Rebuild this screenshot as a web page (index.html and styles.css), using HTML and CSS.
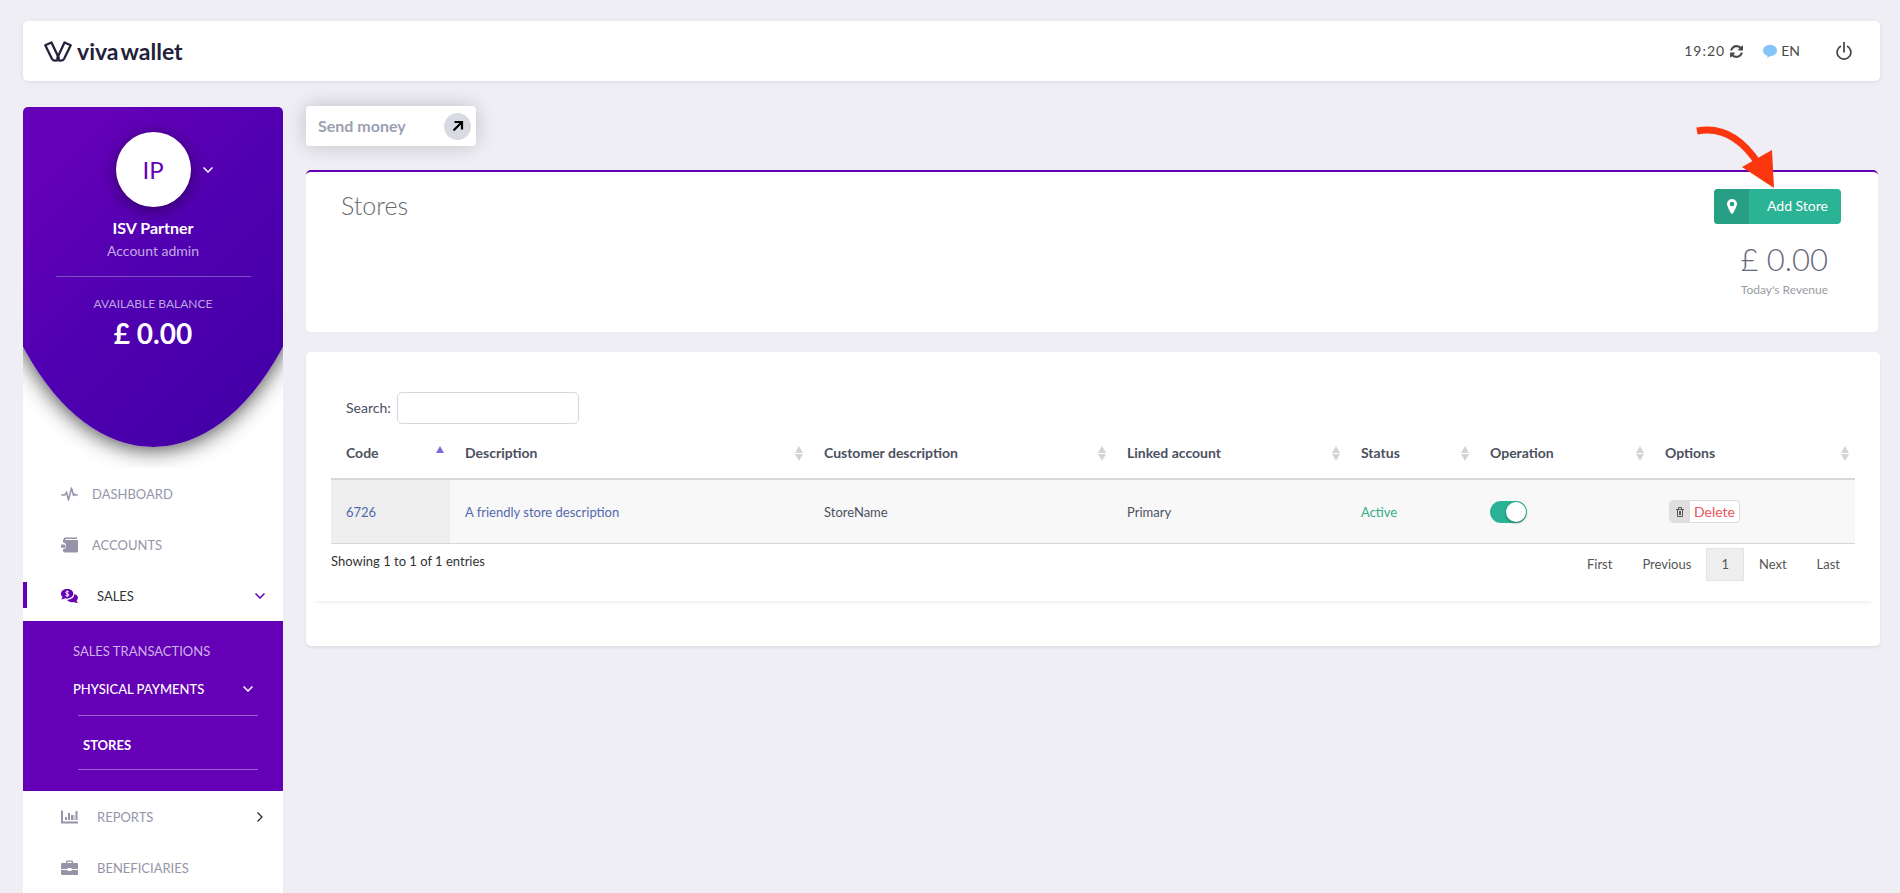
FILE: index.html
```html
<!DOCTYPE html>
<html lang="en">
<head>
<meta charset="utf-8">
<title>Stores</title>
<link rel="stylesheet" href="styles.css">
</head>
<body>
<header class="topbar">
  <a class="logo" href="#">
    <svg class="logo-mark" viewBox="0 0 28 21" width="28" height="21" fill="none" stroke="currentColor" stroke-width="2.300" stroke-linejoin="round"><path d="M1.300 4.200 7.500 1.500 14.800 17Q14 19.700 11.500 19.700 9 19.700 8 18Z"/><path d="M20.500 1.500 26.700 4.200 20 18Q19 19.700 16.500 19.700 14.300 19.700 13.300 17Z"/></svg>
    <span class="logo-text"><span>viva</span><span>wallet</span></span>
  </a>
  <div class="tools">
    <time class="clock">19:20</time>
    <button class="icon-button refresh" aria-label="Refresh"><svg viewBox="0 0 1536 1536" width="13" height="13" fill="currentColor"><path d="M1511 928q0 5-1 7-64 268-268 434.500T764 1536q-146 0-282.500-55T238 1324l-129 129q-19 19-45 19t-45-19-19-45V960q0-26 19-45t45-19h448q26 0 45 19t19 45-19 45l-137 137q71 66 161 102t187 36q134 0 250-65t186-179q11-17 53-117 8-23 30-23h192q13 0 22.500 9.500t9.500 22.500zm25-800v448q0 26-19 45t-45 19h-448q-26 0-45-19t-19-45 19-45l138-138Q969 256 768 256q-134 0-250 65T332 500q-11 17-53 117-8 23-30 23H50q-13 0-22.500-9.500T18 608v-7q65-268 270-434.500T768 0q146 0 284 55.500T1297 212l130-129q19-19 45-19t45 19 19 45z"/></svg></button>
    <button class="language"><svg viewBox="0 0 14 14" width="14" height="14" fill="#85c4f8"><ellipse cx="7" cy="6.500" rx="7" ry="5.700"/><path d="M5 11 4 14 9 11Z"/></svg>EN</button>
    <button class="icon-button power" aria-label="Log out"><svg viewBox="0 0 16 18" width="16" height="18" fill="none" stroke="currentColor" stroke-width="1.800"><path d="M5 4A6.900 6.900 0 1 0 11 4M8 0V10.500"/></svg></button>
  </div>
</header>
<div class="layout">
  <aside class="sidebar">
    <div class="profile-wrap">
      <section class="profile">
        <div class="avatar-row"><span class="avatar">IP</span><button class="icon-button profile-toggle" aria-label="Account menu"><svg class="chevron" viewBox="0 0 10 6" width="10" height="6"><path d="M.5.5 5 5 9.500.5"/></svg></button></div>
        <strong class="name">ISV Partner</strong>
        <span class="role">Account admin</span>
        <hr class="profile-line">
        <span class="balance-label">AVAILABLE BALANCE</span>
        <strong class="balance">£ 0.00</strong>
      </section>
    </div>
    <nav class="nav">
      <a class="item" href="#"><svg viewBox="0 0 17 16" width="17" height="16" fill="none" stroke="currentColor" stroke-width="1.500" stroke-linejoin="round" stroke-linecap="round"><path d="M.8 9H4L5.500 6 7.500 14 10.500 2 12.500 9.500 13.500 8 14.500 9H16.200"/></svg>DASHBOARD</a>
      <a class="item" href="#"><svg viewBox="0 0 17 16" width="17" height="16" fill="currentColor"><path d="M3 1.500Q3 .5 4 .5H16V2H4.500V3H17V14Q17 15.500 15.500 15.500H4Q2 15.500 2 13.500V12H3A3.500 3.500 0 0 0 3 5.500H2V3Z"/><path d="M0 7.500H3A1.500 1.500 0 0 1 3 10.800H0Z"/></svg>ACCOUNTS</a>
      <a class="item wide active" href="#"><svg viewBox="0 0 17 16" width="17" height="16"><path fill="currentColor" d="M6.200 1C2.800 1 0 3 0 5.700 0 7 .6 8 1.500 9 1.300 10 .8 10.700.2 11.300 1.800 11.300 3 10.700 3.800 10.200 8.500 11.300 12.300 8.500 12.300 5.700 12.300 3 9.600 1 6.200 1ZM13.300 6C13.300 9.500 10 12 5.800 11.800 7.300 14 10.500 14.800 13 14 14 14.700 15.300 15 16.900 15 16.200 14.300 15.700 13.500 15.600 12.600 18 10.500 17.200 7 13.300 6Z"/><path fill="none" stroke="#fff" d="M8 4Q7.500 3.500 6.200 3.500 4.700 3.500 4.700 4.600 4.700 5.500 6.200 5.700 8 6 8 7 8 8 6.200 8 5 8 4.400 7.400M6.200 2.500V9"/></svg>SALES<svg class="chevron end" viewBox="0 0 10 6" width="10" height="6"><path d="M.5.5 5 5 9.500.5"/></svg></a>
      <div class="submenu">
        <a class="sub" href="#">SALES TRANSACTIONS</a>
        <a class="sub current" href="#">PHYSICAL PAYMENTS<svg class="chevron end" viewBox="0 0 10 6" width="10" height="6"><path d="M.5.5 5 5 9.500.5"/></svg></a>
        <a class="leaf" href="#">STORES</a>
      </div>
      <a class="item wide" href="#"><svg viewBox="0 0 17 16" width="17" height="16" fill="currentColor"><path d="M0 1.500H2V12.500H17V14.500H0ZM4 8H6V11H4ZM7 4H9V11H7ZM10 6H12V11H10ZM14.500 2H16.500V11H14.500ZM12.500 6H13.500V11H12.500Z"/></svg>REPORTS<svg class="chevron dark end" viewBox="0 0 6 10" width="6" height="10"><path d="M.5.5 5 5 .5 9.500"/></svg></a>
      <a class="item wide" href="#"><svg viewBox="0 0 17 16" width="17" height="16" fill="currentColor"><path d="M5 3V1.500Q5 .5 6 .5H11Q12 .5 12 1.500V3H16Q17 3 17 4V9H10.500V8H6.500V9H0V4Q0 3 1 3ZM6.300 3H10.700V1.700H6.300ZM0 10H6.500V11H10.500V10H17V14Q17 15 16 15H1Q0 15 0 14Z" fill-rule="evenodd"/></svg>BENEFICIARIES</a>
    </nav>
  </aside>
  <main class="main">
    <button class="send">Send money<span class="send-icon"><svg viewBox="0 0 12 12" width="12" height="12" fill="none" stroke="#000" stroke-width="2.200"><path d="M1.500 10.500 10 2M2.500 2H10V9.500"/></svg></span></button>
    <section class="summary">
      <h1 class="title">Stores</h1>
      <div class="summary-side">
        <button class="add"><span class="add-icon"><svg viewBox="0 0 10 15" width="10" height="15" fill="#fff"><path fill-rule="evenodd" d="M5 0A5 5 0 0 0 0 5C0 7 3 13 4.200 14.500Q5 15.200 5.800 14.500C7 13 10 7 10 5A5 5 0 0 0 5 0ZM5 2.700A2.300 2.300 0 1 1 5 7.300 2.300 2.300 0 0 1 5 2.700Z"/></svg></span><span class="add-label">Add Store</span></button>
        <div class="revenue">£ 0.00</div>
        <div class="revenue-label">Today's Revenue</div>
      </div>
      <svg class="pointer" viewBox="0 0 80 66" width="80" height="66"><path d="M1 7Q36 0 62 39" fill="none" stroke="#fb360f" stroke-width="7"/><path d="M46 43 76 26 78 64Z" fill="#fb360f"/></svg>
    </section>
    <section class="panel">
      <div class="panel-inner">
        <div class="search"><label for="search">Search:</label><input id="search" class="search-input" type="text"></div>
        <table class="stores">
          <colgroup><col class="c-code"><col class="c-desc"><col class="c-cust"><col class="c-link"><col class="c-status"><col class="c-oper"><col class="c-opt"></colgroup>
          <thead><tr>
            <th class="asc"><span class="head">Code<i class="sort"></i></span></th>
            <th><span class="head">Description<i class="sort"></i></span></th>
            <th><span class="head">Customer description<i class="sort"></i></span></th>
            <th><span class="head">Linked account<i class="sort"></i></span></th>
            <th><span class="head">Status<i class="sort"></i></span></th>
            <th><span class="head">Operation<i class="sort"></i></span></th>
            <th><span class="head">Options<i class="sort"></i></span></th>
          </tr></thead>
          <tbody><tr>
            <td class="sorted"><a class="link" href="#">6726</a></td>
            <td><a class="link" href="#">A friendly store description</a></td>
            <td>StoreName</td>
            <td>Primary</td>
            <td class="ok">Active</td>
            <td><input class="toggle" type="checkbox" checked aria-label="Store enabled"></td>
            <td><button class="delete"><span class="delete-icon"><svg viewBox="0 0 8 10" width="8" height="10" fill="none" stroke="#555"><path d="M0 2.500H8M2.500 2V.5H5.500V2M1.500 3V9.500H6.500V3M3.500 4V8M4.500 4V8"/></svg></span><span class="delete-label">Delete</span></button></td>
          </tr></tbody>
        </table>
        <div class="foot">
          <span class="info">Showing 1 to 1 of 1 entries</span>
          <nav class="pages"><a class="page" href="#">First</a><a class="page" href="#">Previous</a><a class="page on" href="#">1</a><a class="page" href="#">Next</a><a class="page" href="#">Last</a></nav>
        </div>
      </div>
    </section>
  </main>
</div>
</body>
</html>
```
FILE: styles.css
```css
* { box-sizing: border-box; }
body {
  margin: 0;
  padding: 21px 20px 0 23px;
  background: #efeef5;
  color: #4b5060;
  font: 14px/20px Lato, "Open Sans", sans-serif;
}
a { color: inherit; text-decoration: none; }
button { border: 0; padding: 0; background: none; color: inherit; font: inherit; cursor: pointer; }
svg { display: block; flex: none; }

.topbar {
  display: flex;
  justify-content: space-between;
  align-items: center;
  height: 60px;
  padding: 0 28px 0 21px;
  background: #fff;
  border-radius: 5px;
  box-shadow: 0 1px 4px rgba(0, 0, 0, .08);
  color: #4a4a4a;
}
.logo { display: flex; align-items: center; gap: 5px; color: #24213a; }
.logo-text { display: flex; gap: 2px; font-size: 23px; line-height: 24px; font-weight: 700; }
.tools { display: flex; align-items: center; }
.clock { letter-spacing: 1px; }
.refresh { margin-left: 5px; }
.language { display: flex; align-items: center; gap: 4px; margin: 0 36px 0 20px; }

.layout { display: flex; align-items: flex-start; gap: 23px; padding-top: 25px; }
.sidebar { flex: none; width: 260px; min-height: calc(100vh - 107px); margin-top: 1px; background: #fff; border-radius: 5px 5px 0 0; }
.profile-wrap { overflow: hidden; padding-bottom: 21px; border-radius: 5px 5px 0 0; }
.profile {
  display: flex;
  flex-direction: column;
  align-items: center;
  height: 340px;
  margin: 0 -50px;
  padding: 25px 50px 0;
  background: linear-gradient(135deg, #6400b8 20%, #4f00b0 50%, #4400a6 85%);
  border-radius: 0 0 180px 180px / 0 0 325px 325px;
  box-shadow: 0 2px 22px rgba(0, 0, 0, .75);
  color: #fff;
}
.avatar-row { display: grid; grid-template-columns: 1fr 75px 1fr; align-items: center; align-self: stretch; }
.avatar {
  grid-column: 2;
  height: 75px;
  border-radius: 50%;
  background: #fff;
  box-shadow: 0 3px 16px rgba(0, 0, 0, .45);
  color: #6400b5;
  font-size: 24px;
  line-height: 75px;
  text-align: center;
}
.profile-toggle { justify-self: start; margin-left: 12px; }
.name { margin-top: 11px; font-size: 16px; }
.role { margin-top: 3px; font-size: 14px; color: #c3aae6; }
.profile-line { width: 195px; margin: 15px 0 17px; border: 0; border-top: 1px solid #7e4fc2; }
.balance-label { font-size: 12px; color: #bda5e2; }
.balance { margin-top: 5px; font-size: 28px; line-height: 28px; }

.chevron { fill: none; stroke: currentColor; stroke-width: 1.5; }
.dark { margin-right: 2px; color: #222; stroke-width: 1.2; }
.end { margin-left: auto; }
.nav { display: flex; flex-direction: column; font-size: 13px; }
.item { display: flex; align-items: center; gap: 14px; height: 51px; padding: 0 18px 0 38px; color: #9694a9; }
.wide { gap: 19px; }
.active {
  padding-left: 34px;
  border-left: 4px solid #6400b5;
  border-image: linear-gradient(transparent 24%, #6400b5 24%, #6400b5 73%, transparent 73%) 1;
}
.item.active { color: #333; }
.item.active svg { color: #6400b5; }
.submenu { display: flex; flex-direction: column; height: 170px; padding: 11px 25px 0 50px; background: #6400b5; color: #cdb3ea; }
.sub { display: flex; align-items: center; height: 38px; padding-right: 5px; }
.current { color: #fff; font-weight: 500; }
.leaf {
  margin: 7px 0 0 5px;
  padding: 19px 5px 14px;
  border: solid #a161d4;
  border-width: 1px 0;
  color: #fff;
  font-weight: 700;
}

.main { flex: 1; min-width: 0; }
.send {
  display: flex;
  justify-content: space-between;
  align-items: center;
  width: 170px;
  height: 40px;
  padding: 0 5px 0 12px;
  background: #fff;
  border-radius: 4px;
  box-shadow: 0 0 20px rgba(0, 0, 0, .2);
  color: #9aa0b2;
  font-size: 16px;
  font-weight: 700;
}
.send-icon { display: grid; place-items: center; width: 27px; height: 27px; border-radius: 50%; background: #d9dbe3; }
.summary {
  position: relative;
  display: flex;
  justify-content: space-between;
  height: 162px;
  margin: 24px 2px 20px 0;
  padding: 17px 37px 0 35px;
  background: #fff;
  border-top: 2px solid #6400b5;
  border-radius: 5px;
}
.title { margin: 2px 0 0; color: #676a6c; font-size: 25px; line-height: 28px; font-weight: 300; }
.summary-side { display: flex; flex-direction: column; align-items: flex-end; }
.add { display: flex; width: 127px; height: 35px; overflow: hidden; border-radius: 4px; background: #2ab395; color: #fff; line-height: 34px; }
.add-icon { display: grid; place-items: center; width: 35px; background: #269f84; }
.add-label { flex: 1; padding-right: 13px; text-align: right; }
.revenue { margin: 17px 13px 0 0; color: #66687a; font-size: 31px; line-height: 36px; font-weight: 300; }
.revenue-label { margin: 3px 13px 0 0; color: #9b9ba3; font-size: 12px; }
.pointer { position: absolute; top: -48px; right: 102px; }

.panel { padding: 0 8px 45px; background: #fff; border-radius: 5px; box-shadow: 0 2px 3px rgba(0, 0, 0, .07); }
.panel-inner { padding: 40px 17px 20px; box-shadow: 0 3px 3px -1px rgba(0, 0, 0, .06); }
.search { display: flex; align-items: center; gap: 6px; padding-left: 15px; }
.search-input { width: 182px; height: 32px; padding: 0 8px; border: 1px solid #d5d6df; border-radius: 5px; background: #fff; font: inherit; }
.stores { width: 100%; table-layout: fixed; border-collapse: separate; border-spacing: 0; }
.c-code { width: 119px; }
.c-cust { width: 303px; }
.c-link { width: 234px; }
.c-status { width: 129px; }
.c-oper { width: 175px; }
.c-opt { width: 205px; }
.stores th { height: 56px; padding: 4px 6px 0 15px; border-bottom: 2px solid #d7d7d7; text-align: left; font-weight: 700; }
.head { display: flex; justify-content: space-between; align-items: center; }
.sort { display: grid; gap: 1px; }
.sort::before, .sort::after { content: ""; border: 4px solid transparent; }
.sort::before { border-top: 0; border-bottom: 7px solid #d4d4d4; }
.sort::after { border-bottom: 0; border-top: 7px solid #d4d4d4; }
.asc .sort::before { border-bottom-color: #8266dc; }
.asc .sort::after { border-top-color: transparent; }
.stores td { height: 64px; padding: 0 15px; background: #f8f8f8; border-bottom: 1px solid #d7d7d7; font-size: 13px; }
.stores .sorted { background: #eee; }
.link { color: #5269ae; }
.stores .ok { color: #34ad87; }
.toggle { appearance: none; display: flex; width: 37px; height: 22px; margin: 0; padding: 1px; border-radius: 11px; background: #c8c8c8; cursor: pointer; }
.toggle:checked { justify-content: flex-end; background: #2ab395; }
.toggle::before { content: ""; width: 20px; height: 20px; border-radius: 50%; background: #fff; box-shadow: 0 1px 3px rgba(0, 0, 0, .4); }
.delete { display: flex; height: 23px; margin-left: 4px; overflow: hidden; border: 1px solid #dcdcdc; border-radius: 4px; background: #fff; color: #ed5160; font-size: 14px; line-height: 22px; }
.delete-icon { display: grid; place-items: center; width: 20px; background: #dfdfdf; }
.delete-label { padding: 0 4px; }
.foot { display: flex; justify-content: space-between; align-items: flex-start; padding-top: 4px; font-size: 13px; }
.info { margin-top: 3px; color: #333; }
.pages { display: flex; color: #555; }
.page { height: 33px; padding: 0 14px; border: 1px solid transparent; line-height: 31px; }
.on { border-color: #e4e4e4; background: #eee; }
```
